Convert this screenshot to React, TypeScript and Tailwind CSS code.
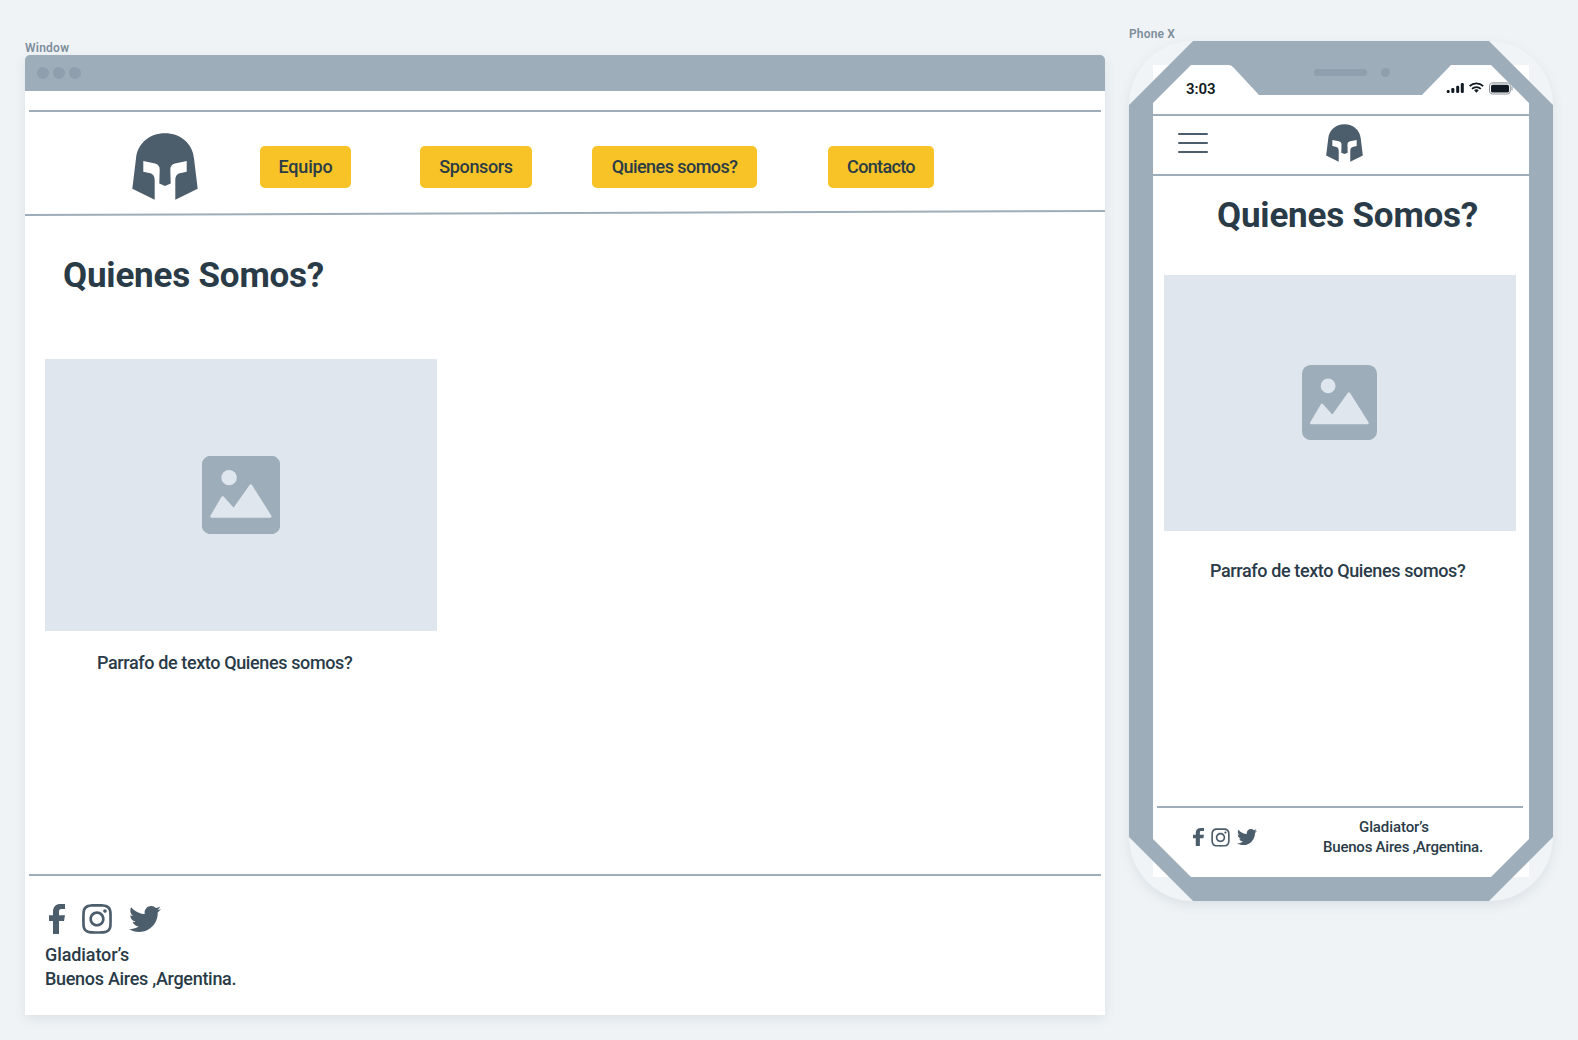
import type { ReactNode } from "react";
import { FaInstagram, FaTwitter } from "react-icons/fa";

function Helmet({ className }: { className: string }) {
  return (
    <svg viewBox="0 0 66 67" preserveAspectRatio="none" className={className} fill="currentColor" aria-hidden="true">
      <path d="M33 0.300C48.5 0.300 60.600 10.5 62 25.5L65.700 55.7 43.3 66.700V47.5C43.3 42.5 45 40.6 49 39.9L54.7 38.8V28L43 30.6C39.8 31.4 38.3 33.5 38.3 36.5L38.7 50.5 33 53 27.3 50.5 27.7 36.5C27.7 33.5 26.2 31.4 23 30.6L11.3 28V38.8L17 39.9C21 40.6 22.7 42.5 22.7 47.5V66.700L0.300 55.7 4 25.5C5.400 10.5 17.5 0.300 33 0.300Z" />
    </svg>
  );
}

function FacebookIcon({ className }: { className: string }) {
  return (
    <svg viewBox="0 0 16 30" preserveAspectRatio="none" className={className} fill="currentColor" aria-hidden="true">
      <path d="M4 30V17H0V11.3H4V8C4 2.6 7 0 11.5 0H16V5H12.5C10.7 5 10 5.8 10 7.5V11.3H16L15 17H10V30Z" />
    </svg>
  );
}

function PictureIcon({ className }: { className: string }) {
  return (
    <svg viewBox="0 0 79 79" className={className} aria-hidden="true">
      <rect width="79" height="79" rx="9" fill="#9dadb9" />
      <circle cx="27.5" cy="22" r="7.8" fill="#dfe6ee" />
      <path d="M9.8 61 21 42 32.1 54.3 49.4 30 69 61Z" fill="#dfe6ee" stroke="#dfe6ee" strokeWidth="2.6" strokeLinejoin="round" />
    </svg>
  );
}

function NavButton({ className, children }: { className: string; children: ReactNode }) {
  return (
    <button className={`mt-[34px] h-[42px] shrink-0 rounded-[5px] bg-[#f8c327] text-center text-lg font-medium whitespace-nowrap ${className}`}>
      {children}
    </button>
  );
}

function WindowMockup() {
  return (
    <section className="w-[1080px] shrink-0 pt-10">
      <div className="h-[15px] text-xs leading-[17px] font-semibold tracking-[0.25px] text-[#7d8e9b]">Window</div>
      <div className="flex h-[960px] flex-col overflow-hidden rounded-t-[5px] bg-white shadow-[0_4px_12px_rgba(60,80,100,0.1)]">
        <div className="flex h-9 shrink-0 items-center gap-1 bg-[#9dadb9] pl-3">
          <span className="size-3 rounded-full bg-[#8f9fad]" />
          <span className="size-3 rounded-full bg-[#8f9fad]" />
          <span className="size-3 rounded-full bg-[#8f9fad]" />
        </div>
        <div className="mx-1 mt-[19px] h-0.5 shrink-0 bg-[#9dadb9]" />
        <nav className="flex h-[98px] shrink-0 items-start pl-[107px]">
          <Helmet className="mt-[21px] h-[67px] w-[66px] shrink-0 text-[#4c5d6b]" />
          <NavButton className="ml-[62px] w-[91px] tracking-[-0.2px]">Equipo</NavButton>
          <NavButton className="ml-[69px] w-[112px] tracking-[-0.35px]">Sponsors</NavButton>
          <NavButton className="ml-[60px] w-[165px] tracking-[-0.55px]">Quienes somos?</NavButton>
          <NavButton className="ml-[71px] w-[106px] tracking-[-0.65px]">Contacto</NavButton>
        </nav>
        <svg viewBox="0 0 1080 6" className="h-1.5 w-full shrink-0" aria-hidden="true">
          <path d="M0 5 1080 1" stroke="#9dadb9" strokeWidth="2" />
        </svg>
        <h1 className="mt-10 ml-[38px] h-[39px] text-[35px] leading-10 font-bold tracking-[-0.2px] whitespace-nowrap">Quienes Somos?</h1>
        <div className="mt-16 ml-5 flex h-[272px] w-[392px] shrink-0 items-center justify-center bg-[#dfe6ee]">
          <PictureIcon className="size-20 p-[0.8px]" />
        </div>
        <p className="mt-5 ml-[72px] h-6 text-lg leading-6 font-medium tracking-[-0.38px]">Parrafo de texto Quienes somos?</p>
        <div className="mx-1 mt-[199px] h-0.5 shrink-0 bg-[#9dadb9]" />
        <footer className="px-5 pt-7">
          <div className="flex h-[30px] items-center pl-1 text-[#4c5d6b]">
            <FacebookIcon className="h-[30px] w-4" />
            <FaInstagram className="ml-[15px] size-[34px]" />
            <FaTwitter className="ml-[15px] size-8" />
          </div>
          <p className="mt-[9px] text-lg leading-6 font-medium">
            <span className="tracking-[-0.1px]">Gladiator’s</span>
            <br />
            <span className="tracking-[-0.3px]">Buenos Aires ,Argentina.</span>
          </p>
        </footer>
      </div>
    </section>
  );
}

function StatusIcons() {
  return (
    <svg viewBox="0 0 68 14" className="h-3.5 w-[68px]" aria-hidden="true">
      <g fill="#111a22">
        <rect x="0.7" y="9" width="3" height="3" rx="1.2" />
        <rect x="5.3" y="7" width="3" height="5" rx="1.2" />
        <rect x="10.2" y="4.7" width="3" height="7.3" rx="1.2" />
        <rect x="14.8" y="2" width="3" height="10" rx="1.2" />
        <path d="M28.1 9.2a3 3 0 0 1 4.6 0l-2.3 2.6Z" />
        <rect x="45" y="3.7" width="18" height="7.8" rx="1.6" />
      </g>
      <g fill="none" stroke="#111a22" strokeWidth="1.8">
        <path d="M23.6 5.2a9.7 9.7 0 0 1 13.6 0" />
        <path d="M26 7.9a6.4 6.4 0 0 1 8.8 0" />
      </g>
      <rect x="43.5" y="1.8" width="20.8" height="11.2" rx="3" fill="none" stroke="#8b9096" />
      <path d="M44.5 2.6H63.5" stroke="#c4c7ca" strokeWidth="1.6" />
      <path d="M66 5.5v4" stroke="#8b9096" />
    </svg>
  );
}

function PhoneFrame() {
  return (
    <svg viewBox="0 0 424 860" className="pointer-events-none absolute inset-0 h-[860px] w-[424px]" aria-hidden="true">
      <path
        fillRule="evenodd"
        fill="#9dadb9"
        d="M64 0H360L424 64V796L360 860H64L0 796V64ZM62 24 24 62V798L62 836H362L400 798V62L362 24H322L293 54H130L105 27Q102.500 24 100 24Z"
      />
      <rect x="185" y="28" width="53" height="7" rx="3.5" fill="#8f9fad" />
      <circle cx="256.4" cy="31.5" r="4.5" fill="#8f9fad" />
    </svg>
  );
}

function PhoneMockup() {
  return (
    <section className="ml-6 w-[424px] shrink-0 pt-[26px]">
      <div className="h-[15px] text-xs leading-[17px] font-semibold tracking-[0.15px] text-[#7d8e9b]">Phone X</div>
      <div className="relative h-[860px] rounded-[64px] bg-[#f0f4f7] p-6 shadow-[0_4px_12px_rgba(60,80,100,0.1)]">
        <div className="flex h-[812px] flex-col bg-white">
          <div className="flex h-[49px] shrink-0 items-start justify-between pr-[15px] pl-[33px]">
            <span className="mt-[14px] text-[15px] leading-5 font-semibold tracking-[-0.1px] text-[#111a22]">3:03</span>
            <span className="mt-4">
              <StatusIcons />
            </span>
          </div>
          <div className="flex h-[62px] shrink-0 items-start border-y-2 border-[#9dadb9] pl-[25px] text-[#4c5d6b]">
            <div className="mt-[17px] flex w-[30px] flex-col gap-[7px]">
              <span className="h-0.5 rounded-full bg-[#4c5d6b]" />
              <span className="h-0.5 rounded-full bg-[#4c5d6b]" />
              <span className="h-0.5 rounded-full bg-[#4c5d6b]" />
            </div>
            <Helmet className="mt-2 ml-[118px] h-[38px] w-[37px]" />
          </div>
          <h1 className="mt-5 ml-[64px] h-[39px] text-[35px] leading-10 font-bold tracking-[-0.2px] whitespace-nowrap">Quienes Somos?</h1>
          <div className="mt-10 ml-[11px] flex h-64 w-[352px] shrink-0 items-center justify-center bg-[#dfe6ee] pr-px pb-px">
            <PictureIcon className="size-[75px]" />
          </div>
          <p className="mt-7 ml-[57px] h-6 text-lg leading-6 font-medium tracking-[-0.38px] whitespace-nowrap">Parrafo de texto Quienes somos?</p>
          <div className="mt-[223px] mr-1.5 ml-1 h-0.5 shrink-0 bg-[#9dadb9]" />
          <footer className="flex items-start pl-10">
            <div className="mt-5 flex h-[18px] items-center text-[#4c5d6b]">
              <FacebookIcon className="h-[18px] w-[11px]" />
              <FaInstagram className="ml-[6px] size-[21px]" />
              <FaTwitter className="ml-[6px] size-5" />
            </div>
            <p className="mt-[9px] ml-[66px] w-[160px] text-center text-[15px] leading-5 font-medium tracking-[-0.23px] whitespace-nowrap">
              <span className="mr-[18px] tracking-[-0.1px]">Gladiator’s</span>
              <br />
              Buenos Aires ,Argentina.
            </p>
          </footer>
        </div>
        <PhoneFrame />
      </div>
    </section>
  );
}

export default function App() {
  return (
    <main className="flex h-[1040px] w-[1578px] items-start overflow-hidden bg-[#eff3f6] pl-[25px] font-[Roboto,'Liberation_Sans',sans-serif] text-[#2a3b48]">
      <WindowMockup />
      <PhoneMockup />
    </main>
  );
}
